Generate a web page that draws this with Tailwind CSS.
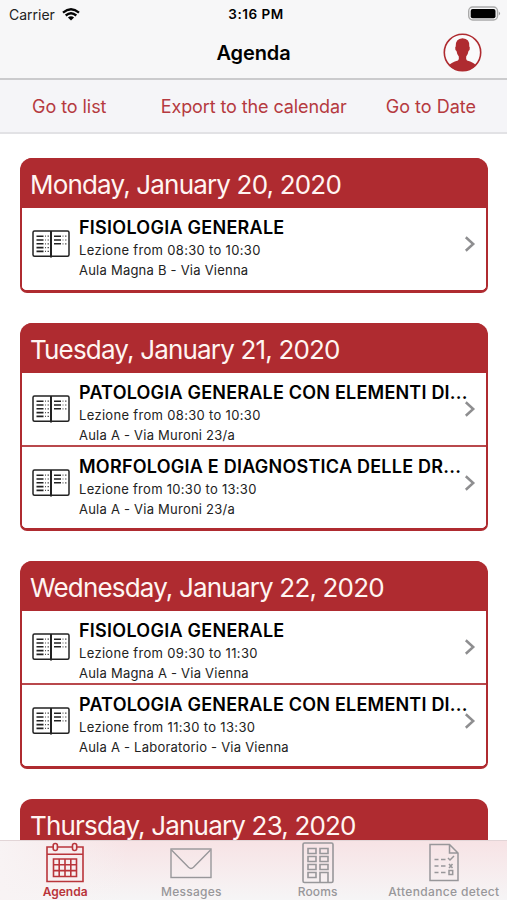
<!DOCTYPE html>
<html lang="en">
<head>
<meta charset="utf-8">
<title>Agenda</title>
<script src="https://cdn.jsdelivr.net/npm/@tailwindcss/browser@4"></script>
</head>
<body class="bg-white">
<svg class="hidden">
  <symbol id="book" viewBox="0 0 38 28">
    <g fill="none" stroke="#222" stroke-width="1.5">
      <rect x="1" y="1" width="36" height="25.300" rx="1.500"/>
      <path d="M19 1V27.500" stroke-width="2"/>
      <path d="M4.500 6.200h7M4.500 10h7M4.500 13.800h7M4.500 17.600h7M4.500 21.400h7M22 6.200h7M22 10h7M22 13.800h7" stroke-width="1.600"/>
      <path d="M13 6.200h1M15.500 6.200h1.500M13 10h1M15.500 10h1.500M13 13.800h1M15.500 13.800h1.500M13 17.600h1M15.500 17.600h1.500M13 21.400h1M15.500 21.400h1.500M30.500 6.200h1M33 6.200h1.500M30.500 10h1M33 10h1.500M30.500 13.800h1M33 13.800h1.500" stroke-width="1.200" stroke="#555"/>
    </g>
  </symbol>
  <symbol id="chevron" viewBox="0 0 12 16"><path d="M1.800 1.300L9.200 8L1.800 14.700" fill="none" stroke="#8e8e90" stroke-width="2.500"/></symbol>
</svg>
<div class="flex h-[900px] w-[507px] flex-col overflow-hidden bg-white font-['Inter',sans-serif] whitespace-nowrap text-black">
  <header class="h-20 shrink-0 border-b-2 border-[#cbcbcd] bg-[#f7f7f8]">
    <div class="grid h-7 grid-cols-3 items-center pr-[6px] pl-[9px] text-[14px]">
      <div class="flex items-center gap-[7px] text-[#222]">
        <span>Carrier</span>
        <svg class="h-[13px] w-[18px]" viewBox="0 0 18 13" fill="none" stroke="#050505" stroke-width="2.300"><path d="M1 4.600Q9-2 17 4.600M3.700 7.500Q9 3 14.300 7.500"/><path d="M9 12.600L5.900 9.500Q9 7.200 12.100 9.500Z" fill="#050505" stroke="none"/></svg>
      </div>
      <span class="-mr-[2px] text-center text-[13.5px] font-semibold tracking-[0.5px]">3:16 PM</span>
      <svg class="-mt-[2px] h-[15px] w-[34px] justify-self-end" viewBox="0 0 34 15"><rect x="1.700" y="1" width="28.800" height="13" rx="4" fill="none" stroke="#aaa" stroke-width="1.400"/><rect x="3.700" y="2.900" width="24.800" height="9.400" rx="2"/><path d="M31.800 5.500Q34.300 7.500 31.800 9.500Z" fill="#999"/></svg>
    </div>
    <div class="grid h-[50px] grid-cols-[1fr_auto_1fr] items-center pr-[25px] pl-[25px]">
      <h1 class="col-start-2 text-[20px] font-semibold tracking-[-0.1px]">Agenda</h1>
      <svg class="-mt-[2px] h-[39px] w-[39px] justify-self-end" viewBox="0 0 39 39"><circle cx="19.500" cy="19.500" r="18.200" fill="#fafafb" stroke="#af2b30" stroke-width="1.600"/><path fill="#af2b30" d="M6 32.500Q8 29.500 15 27.500Q16.300 26.500 15.800 23.500Q14 21.500 13.500 18Q12 17.500 12.200 14.500L12.700 13.500Q12.300 5.500 19.500 5.200Q27 5.500 26.300 13.500L26.800 14.500Q27 17.500 25.500 18Q25 21.500 23.200 23.500Q22.700 26.500 24 27.500Q31 29.500 33 32.500Q27 38 19.500 38Q12 38 6 32.500Z"/></svg>
    </div>
  </header>
  <nav class="flex h-[54px] shrink-0 items-center justify-between border-b-2 border-[#e2e2e5] bg-[#f5f5f8] pt-px pr-[31px] pl-[32px] text-[18px] text-[#b53a40]">
    <span class="tracking-[-0.05px]">Go to list</span><span class="pl-[15px] tracking-[-0.1px]">Export to the calendar</span><span>Go to Date</span>
  </nav>
  <main class="flex min-h-0 flex-1 flex-col gap-[30px] overflow-hidden pt-[24px] pr-[19px] pl-[20px]">
    <section class="h-[135px] shrink-0 overflow-hidden rounded-t-[12px] rounded-b-[7px] border-x-2 border-b-[3px] border-[#af2b30] bg-linear-to-b from-[#af2b30] from-50% to-white to-50%">
      <h2 class="h-[50px] bg-[#af2b30] pl-[8px] text-[26px] leading-[54px] tracking-[-0.82px] text-[#fff5f2]">Monday, January 20, 2020</h2>
      <article class="flex h-[82px] bg-white pr-[10px] pl-[10px]">
        <svg class="mt-[22px] mr-[9px] h-7 w-[38px] shrink-0"><use href="#book"/></svg>
        <div class="min-w-0 flex-1 pt-[9px]"><h3 class="text-[18px] leading-[22px] font-semibold tracking-[0.26px]">FISIOLOGIA GENERALE</h3><p class="mt-px text-[13px] leading-[20px] tracking-[0.32px] text-[#222]">Lezione from 08:30 to 10:30<br><span class="tracking-[0.23px]">Aula Magna B - Via Vienna</span></p></div>
        <svg class="mt-[28px] h-4 w-3 shrink-0"><use href="#chevron"/></svg>
      </article>
    </section>
    <section class="h-[208px] shrink-0 overflow-hidden rounded-t-[12px] rounded-b-[7px] border-x-2 border-b-[3px] border-[#af2b30] bg-linear-to-b from-[#af2b30] from-50% to-white to-50%">
      <h2 class="h-[50px] bg-[#af2b30] pl-[8px] text-[26px] leading-[54px] tracking-[-0.82px] text-[#fff5f2]">Tuesday, January 21, 2020</h2>
      <article class="flex h-[73px] bg-white pr-[10px] pl-[10px]">
        <svg class="mt-[22px] mr-[9px] h-7 w-[38px] shrink-0"><use href="#book"/></svg>
        <div class="min-w-0 flex-1 pt-[9px]"><h3 class="text-[18px] leading-[22px] font-semibold tracking-[0.21px]">PATOLOGIA GENERALE CON ELEMENTI DI...</h3><p class="mt-px text-[13px] leading-[20px] tracking-[0.32px] text-[#222]">Lezione from 08:30 to 10:30<br><span class="tracking-[0.23px]">Aula A - Via Muroni 23/a</span></p></div>
        <svg class="mt-[28px] h-4 w-3 shrink-0"><use href="#chevron"/></svg>
      </article>
      <div class="-mt-px h-[1.5px] bg-[#b9484c]"></div>
      <article class="flex h-[82px] bg-white pr-[10px] pl-[10px]">
        <svg class="mt-[22px] mr-[9px] h-7 w-[38px] shrink-0"><use href="#book"/></svg>
        <div class="min-w-0 flex-1 pt-[9px]"><h3 class="text-[18px] leading-[22px] font-semibold tracking-[0.24px]">MORFOLOGIA E DIAGNOSTICA DELLE DR...</h3><p class="mt-px text-[13px] leading-[20px] tracking-[0.28px] text-[#222]">Lezione from 10:30 to 13:30<br><span class="tracking-[0.23px]">Aula A - Via Muroni 23/a</span></p></div>
        <svg class="mt-[28px] h-4 w-3 shrink-0"><use href="#chevron"/></svg>
      </article>
    </section>
    <section class="h-[208px] shrink-0 overflow-hidden rounded-t-[12px] rounded-b-[7px] border-x-2 border-b-[3px] border-[#af2b30] bg-linear-to-b from-[#af2b30] from-50% to-white to-50%">
      <h2 class="h-[50px] bg-[#af2b30] pl-[8px] text-[26px] leading-[54px] tracking-[-0.82px] text-[#fff5f2]">Wednesday, January 22, 2020</h2>
      <article class="flex h-[73px] bg-white pr-[10px] pl-[10px]">
        <svg class="mt-[22px] mr-[9px] h-7 w-[38px] shrink-0"><use href="#book"/></svg>
        <div class="min-w-0 flex-1 pt-[9px]"><h3 class="text-[18px] leading-[22px] font-semibold tracking-[0.26px]">FISIOLOGIA GENERALE</h3><p class="mt-px text-[13px] leading-[20px] tracking-[0.32px] text-[#222]">Lezione from 09:30 to 11:30<br><span class="tracking-[0.23px]">Aula Magna A - Via Vienna</span></p></div>
        <svg class="mt-[28px] h-4 w-3 shrink-0"><use href="#chevron"/></svg>
      </article>
      <div class="-mt-px h-[1.5px] bg-[#b9484c]"></div>
      <article class="flex h-[82px] bg-white pr-[10px] pl-[10px]">
        <svg class="mt-[22px] mr-[9px] h-7 w-[38px] shrink-0"><use href="#book"/></svg>
        <div class="min-w-0 flex-1 pt-[9px]"><h3 class="text-[18px] leading-[22px] font-semibold tracking-[0.21px]">PATOLOGIA GENERALE CON ELEMENTI DI...</h3><p class="mt-px text-[13px] leading-[20px] tracking-[0.34px] text-[#222]">Lezione from 11:30 to 13:30<br><span class="tracking-[0.23px]">Aula A - Laboratorio - Via Vienna</span></p></div>
        <svg class="mt-[28px] h-4 w-3 shrink-0"><use href="#chevron"/></svg>
      </article>
    </section>
    <section class="h-[135px] shrink-0 overflow-hidden rounded-t-[12px] bg-[#af2b30]">
      <h2 class="h-[50px] pl-[10px] text-[26px] leading-[54px] tracking-[-0.82px] text-[#fff5f2]">Thursday, January 23, 2020</h2>
    </section>
  </main>
  <footer class="grid h-[60px] shrink-0 grid-cols-4 border-t border-[#e2d5d7] bg-linear-to-b from-[#f7e3e5] to-[#f6f5f6] pl-[2px] text-[12px] font-medium text-[#98979a]">
    <div class="-ml-[2px] flex flex-col items-center bg-linear-to-r from-[#f8f3f4] to-transparent pl-[2px] text-[#b9353b]">
      <svg class="mt-[1px] h-[41px] w-[40px]" viewBox="0 0 40 41" fill="none" stroke="currentColor" stroke-width="1.600"><path d="M8 5H2v34.500h36V5h-6M13 5h14M2 12.300h36"/><rect x="8.200" y="1.500" width="4.200" height="7" rx="2"/><rect x="27.500" y="1.500" width="4.200" height="7" rx="2"/><path d="M8.500 17h23v17.500h-23zM14.200 17v17.500M20 17v17.500M25.800 17v17.500M8.500 22.800h23M8.500 28.600h23"/></svg>
      <span class="leading-[18px] font-semibold">Agenda</span>
    </div>
    <div class="flex flex-col items-center">
      <svg class="mt-[1px] h-[41px] w-[42px]" viewBox="0 0 42 41" fill="none" stroke="currentColor" stroke-width="1.400"><rect x="1" y="7" width="40" height="28.500"/><path d="M1.500 8L18.500 25.300Q21 27.500 23.500 25.300L40.500 8"/></svg>
      <span class="leading-[18px] tracking-[0.25px]">Messages</span>
    </div>
    <div class="flex flex-col items-center">
      <svg class="mt-[1px] h-[42px] w-[32px]" viewBox="0 0 32 42" fill="none" stroke="currentColor" stroke-width="1.600"><rect x="1" y="1" width="30" height="39.500" rx="1.500"/><path d="M6 6.500h8v5H6zM18 6.500h8v5h-8zM6 14.500h8v5H6zM18 14.500h8v5h-8zM6 22.500h8v5H6zM18 22.500h8v5h-8zM6 30.500h8v5H6zM18 40V30.500h8V40"/></svg>
      <span class="-mt-px leading-[18px] tracking-[0.1px]">Rooms</span>
    </div>
    <div class="flex flex-col items-center">
      <svg class="mt-[1px] h-[41px] w-[32px]" viewBox="0 0 32 41" fill="none" stroke="currentColor" stroke-width="1.500"><path d="M2 2.500H21.500L30 11V38.500H2ZM21.500 2.500V11H30"/><path d="M6.500 17.500h4M13 17.500h4.500M6.500 24h4M13 24h4.500M6.500 30.500h4M13 30.500h4.500M20 16l2 2 4-4M21 22l3.500 4M24.500 22l-3.500 4M21 28.500h3.700v4H21z"/></svg>
      <span class="leading-[18px] tracking-[0.35px]">Attendance detect</span>
    </div>
  </footer>
</div>
</body>
</html>
